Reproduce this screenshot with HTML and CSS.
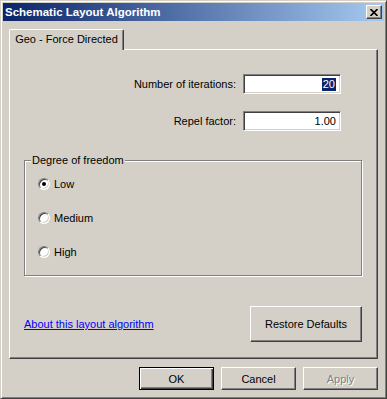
FILE: index.html
```html
<!DOCTYPE html>
<html lang="en">
<head>
    <meta charset="UTF-8">
    <title>Schematic Layout Algorithm</title>
    <link rel="stylesheet" href="styles.css">
</head>
<body>
<div class="window">
    <div class="titlebar">
        <span class="title">Schematic Layout Algorithm</span>
        <div class="close-btn">
            <svg width="8" height="7" viewBox="0 0 8 7">
                <path d="M0.5 0 L7.5 7 M7.5 0 L0.5 7" stroke="#000" stroke-width="1.6"/>
            </svg>
        </div>
    </div>

    <div class="content">
        <div class="tabs">
            <div class="tab">Geo - Force Directed</div>
        </div>

        <div class="panel">
            <div class="fields">
                <label>Number of iterations:</label>
                <div class="field"><span class="selected">20</span></div>

                <label>Repel factor:</label>
                <div class="field">1.00</div>
            </div>

            <!-- Degree of freedom group -->
            <div class="group">
                <div class="group-title">Degree of freedom</div>
                <div class="radio-list">
                    <div class="radio-row"><span class="radio checked"></span>Low</div>
                    <div class="radio-row"><span class="radio"></span>Medium</div>
                    <div class="radio-row"><span class="radio"></span>High</div>
                </div>
            </div>

            <div class="panel-footer">
                <a href="#" class="about-link">About this layout algorithm</a>
                <button class="btn restore-btn">Restore Defaults</button>
            </div>
        </div>

        <div class="dialog-buttons">
            <button class="btn default">OK</button>
            <button class="btn">Cancel</button>
            <button class="btn disabled">Apply</button>
        </div>
    </div>
</div>
</body>
</html>
```

FILE: styles.css
```css
* {
    box-sizing: border-box;
}
body {
    margin: 0;
    background-color: #d4d0c8;
    font-family: 'Liberation Sans', Arial, sans-serif;
    font-size: 11px;
    color: #000;
}
.window {
    width: 387px;
    height: 399px;
    padding: 2px;
    border: 1px solid;
    border-color: #d4d0c8 #404040 #404040 #d4d0c8;
    box-shadow: inset 1px 1px #fff, inset -1px -1px #808080;
    display: flex;
    flex-direction: column;
}

/* Title bar */
.titlebar {
    height: 18px;
    padding: 0 2px 0 2px;
    background: linear-gradient(to right, #0a246a, #a6caf0);
    color: #fff;
    font-weight: bold;
    font-size: 11.5px;
    display: flex;
    align-items: center;
    justify-content: space-between;
}
.close-btn {
    width: 16px;
    height: 14px;
    background-color: #d4d0c8;
    border: 1px solid;
    border-color: #fff #404040 #404040 #fff;
    box-shadow: inset -1px -1px #808080;
    display: flex;
    align-items: center;
    justify-content: center;
}
.close-btn svg {
    display: block;
    margin-left: -1px;
}

.content {
    flex: 1;
    padding: 8px 6px 0 6px;
    display: flex;
    flex-direction: column;
}

/* Tabs */
.tabs {
    display: flex;
    height: 20px;
}
.tab {
    position: relative;
    z-index: 1;
    width: 115px;
    height: 21px;
    padding-bottom: 2px;
    background-color: #d4d0c8;
    border: 1px solid;
    border-bottom: none;
    border-color: #fff #404040 #fff #fff;
    border-radius: 2px 2px 0 0;
    box-shadow: inset -1px 0 #808080;
    display: flex;
    align-items: center;
    justify-content: center;
}

.panel {
    height: 310px;
    padding: 0 15px 16px 14px;
    border: 1px solid;
    border-color: #fff #404040 #404040 #fff;
    box-shadow: inset -1px -1px #808080;
    display: flex;
    flex-direction: column;
}

/* Number fields */
.fields {
    margin-top: 24px;
    margin-right: 21px;
    display: grid;
    grid-template-columns: auto 98px;
    justify-content: end;
    align-items: center;
    column-gap: 7px;
    row-gap: 17px;
}
.fields label {
    text-align: right;
}
.field {
    height: 20px;
    padding: 0 4px;
    background-color: #fff;
    border: 1px solid;
    border-color: #808080 #fff #fff #808080;
    box-shadow: inset 1px 1px #404040, inset -1px -1px #d4d0c8;
    display: flex;
    align-items: center;
    justify-content: flex-end;
}
.selected {
    background-color: #0a246a;
    color: #fff;
    line-height: 13px;
    padding: 0 1px;
}

/* Group box */
.group {
    margin-top: 29px;
    height: 116px;
    border: 1px solid #808080;
    box-shadow: inset 1px 1px #fff, 1px 1px #fff;
}
.group-title {
    margin: -7px 0 0 6px;
    padding: 0 1px;
    width: fit-content;
    line-height: 13px;
    background-color: #d4d0c8;
}
.radio-list {
    margin-top: 11px;
    padding-left: 13px;
    display: flex;
    flex-direction: column;
    gap: 22px;
}
.radio-row {
    height: 12px;
    display: flex;
    align-items: center;
    gap: 4px;
}
.radio {
    width: 12px;
    height: 12px;
    border-radius: 50%;
    background-color: #fff;
    border: 1px solid;
    border-color: #808080 #fff #fff #808080;
    box-shadow: inset 1px 1px #404040, inset -1px -1px #d4d0c8;
    display: flex;
    align-items: center;
    justify-content: center;
}
.radio.checked::after {
    content: '';
    width: 4px;
    height: 4px;
    border-radius: 50%;
    background-color: #000;
}

.panel-footer {
    margin-top: 30px;
    display: flex;
    align-items: center;
    justify-content: space-between;
}
.about-link {
    color: #0000ff;
    text-decoration: underline;
}

/* Buttons */
.btn {
    font-family: inherit;
    font-size: 11px;
    color: #000;
    background-color: #d4d0c8;
    border: 1px solid;
    border-color: #fff #404040 #404040 #fff;
    box-shadow: inset -1px -1px #808080;
    padding: 0;
    width: 75px;
    height: 23px;
}
.restore-btn {
    width: 112px;
    height: 36px;
}
.btn.default {
    border: 1px solid #000;
    box-shadow: inset 1px 1px #fff, inset -1px -1px #404040, inset -2px -2px #808080;
}
.btn.disabled {
    color: #808080;
    text-shadow: 1px 1px #fff;
}
.dialog-buttons {
    margin-top: 8px;
    display: flex;
    justify-content: flex-end;
    gap: 7px;
}
```
